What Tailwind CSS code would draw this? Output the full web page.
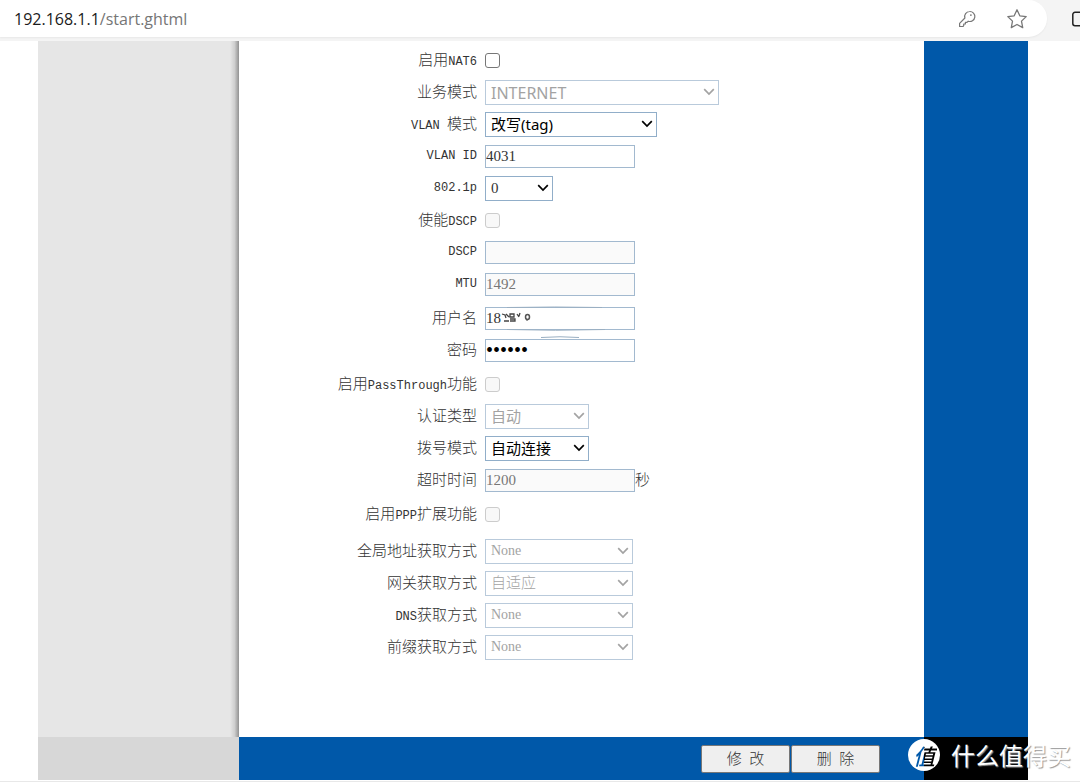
<!DOCTYPE html>
<html lang="zh-CN">
<head>
<meta charset="utf-8">
<title>start.ghtml</title>
<script src="https://cdn.jsdelivr.net/npm/@tailwindcss/browser@4"></script>
</head>
<body class="flex min-h-screen flex-col bg-white font-['Liberation_Serif','Noto_Sans_CJK_SC',serif] text-[15px] leading-5 text-[#333]">

<svg class="hidden" aria-hidden="true">
  <symbol id="chevron" viewBox="0 0 12 8"><path d="M1.2 1.2 6 6l4.800-4.800" fill="none" stroke="currentColor" stroke-width="1.700"/></symbol>
</svg>

<!-- Browser address bar -->
<header class="flex h-[41px] overflow-hidden bg-[#f4f4f4] font-['Open_Sans',sans-serif] text-base">
  <div class="flex h-[37px] flex-1 items-center rounded-r-[19px] bg-white pr-[19px] pl-[14px] shadow-xs">
    <a href="#" class="flex-1"><span class="text-[#1b1b1b]">192.168.1.1</span><span class="text-[#767676]">/start.ghtml</span></a>
    <button type="button" aria-label="密码" class="mr-[30px] text-[#777]">
      <svg class="size-[18px]" viewBox="0 0 18 18" fill="none" stroke="currentColor" stroke-width="1.200" stroke-linejoin="round"><path d="M11.500 1.500a5 5 0 1 1-1.300 9.700L9 12.400H7.400V14H5.700v1.700L5 16.500H1.600v-3.200l5.300-5.300A5 5 0 0 1 11.500 1.500Z"/><circle cx="12.900" cy="5.100" r=".9" fill="currentColor" stroke="none"/></svg>
    </button>
    <button type="button" aria-label="收藏" class="text-[#777]">
      <svg class="size-[22px]" viewBox="0 0 22 22" fill="none" stroke="currentColor" stroke-width="1.300" stroke-linejoin="round"><path d="m11 1.800 2.800 6 6.400.8-4.700 4.500 1.200 6.500L11 16.500l-5.700 3.100 1.200-6.500L1.800 8.600l6.400-.8Z"/></svg>
    </button>
  </div>
  <button type="button" aria-label="分屏" class="flex h-[37px] w-[33px] items-center justify-end overflow-hidden text-[#222]">
    <svg class="h-4 w-[9px]" viewBox="0 0 9 16" fill="none" stroke="currentColor" stroke-width="1.500"><path d="M10 1.300H4A2.200 2.200 0 0 0 1.800 3.500v9A2.200 2.200 0 0 0 4 14.700h6"/></svg>
  </button>
</header>

<main class="flex flex-1 pr-[52px] pl-[38px]">
  <aside class="flex w-[201px] justify-end bg-[#e6e6e6]"><div class="w-[9px] bg-linear-to-r from-[#e6e6e6] via-[#cfcfcf] to-[#929292]"></div></aside>

  <form class="flex flex-1 flex-col pt-[3px]">
    <div class="flex h-8 items-center gap-2"><label for="nat6" class="w-[238px] text-right font-light">启用<span class="font-['Liberation_Mono',monospace] text-xs">NAT6</span></label>
      <input id="nat6" type="checkbox" class="size-[15px] appearance-none rounded-[3px] border border-[#777] bg-white"></div>

    <div class="flex h-8 items-center gap-2"><label for="service" class="w-[238px] text-right font-light">业务模式</label>
      <span class="relative w-[234px] text-[#a3a3a3]"><select id="service" disabled class="block h-[25px] w-full appearance-none border border-[#b9cadb] bg-white pl-[5px] font-['Noto_Sans','Noto_Sans_CJK_SC',sans-serif] text-base"><option>INTERNET</option></select><svg class="pointer-events-none absolute top-2 right-1 h-2 w-3"><use href="#chevron"/></svg></span></div>

    <div class="flex h-8 items-center gap-2"><label for="vlanmode" class="w-[238px] text-right font-light"><span class="font-['Liberation_Mono',monospace] text-xs">VLAN </span>模式</label>
      <span class="relative w-[172px] text-black"><select id="vlanmode" class="block h-[25px] w-full appearance-none border border-[#91aec9] bg-white pl-[5px] font-['Noto_Sans','Noto_Sans_CJK_SC',sans-serif]"><option>改写(tag)</option></select><svg class="pointer-events-none absolute top-2 right-1 h-2 w-3"><use href="#chevron"/></svg></span></div>

    <div class="flex h-8 items-center gap-2"><label for="vlanid" class="w-[238px] text-right font-['Liberation_Mono',monospace] text-xs">VLAN ID</label>
      <input id="vlanid" type="text" value="4031" class="h-[23px] w-[150px] border border-[#a2b9cf] bg-white"></div>

    <div class="flex h-8 items-center gap-2"><label for="dot1p" class="w-[238px] text-right font-['Liberation_Mono',monospace] text-xs">802.1p</label>
      <span class="relative w-[68px] text-black"><select id="dot1p" class="block h-[25px] w-full appearance-none border border-[#91aec9] bg-white pl-[5px] text-[#333]"><option>0</option></select><svg class="pointer-events-none absolute top-2 right-1 h-2 w-3"><use href="#chevron"/></svg></span></div>

    <div class="flex h-8 items-center gap-2"><label for="dscpon" class="w-[238px] text-right font-light">使能<span class="font-['Liberation_Mono',monospace] text-xs">DSCP</span></label>
      <input id="dscpon" type="checkbox" disabled class="size-[15px] appearance-none rounded-[3px] border border-[#ccc] bg-[#f8f8f8]"></div>

    <div class="flex h-8 items-center gap-2"><label for="dscp" class="w-[238px] text-right font-['Liberation_Mono',monospace] text-xs">DSCP</label>
      <input id="dscp" type="text" disabled class="h-[23px] w-[150px] border border-[#a2b9cf] bg-[#fafafa]"></div>

    <div class="flex h-8 items-center gap-2"><label for="mtu" class="w-[238px] text-right font-['Liberation_Mono',monospace] text-xs">MTU</label>
      <input id="mtu" type="text" value="1492" disabled class="h-[23px] w-[150px] border border-[#a2b9cf] bg-[#fafafa] text-[#777]"></div>

    <div class="mt-0.5 flex h-8 items-center gap-2"><label for="user" class="w-[238px] text-right font-light">用户名</label>
      <span class="relative w-[150px]"><input id="user" type="text" value="18" class="block h-[23px] w-full border border-[#a2b9cf] bg-white">
        <!-- Smudge over the hidden part of the account name -->
        <svg class="pointer-events-none absolute -top-1 left-0 h-9 w-[150px]" viewBox="0 0 150 36" fill="none"><path d="M22 4.500Q70 3.500 117 4.500M22 26.500Q70 28 120 26.500M56 34.500Q75 33 94 34.500" stroke="#9aafc2"/><path d="m17 11 3 1 1 3m-2 3h5m-3-7 3 3m1-3h4v3h-4Zm0 5h5v2h-5M32 11l2 3m1-4-1 3" stroke="#444" stroke-width="1.300"/><ellipse cx="42.500" cy="14" rx="2" ry="2.500" stroke="#555" stroke-width="1.500"/><path d="M42 17v1" stroke="#555"/></svg></span></div>

    <div class="flex h-8 items-center gap-2"><label for="pass" class="w-[238px] text-right font-light">密码</label>
      <input id="pass" type="password" value="123456" class="h-[23px] w-[150px] border border-[#a2b9cf] bg-transparent text-xl text-black"></div>

    <div class="mt-0.5 flex h-8 items-center gap-2"><label for="passthrough" class="w-[238px] text-right font-light">启用<span class="font-['Liberation_Mono',monospace] text-xs">PassThrough</span>功能</label>
      <input id="passthrough" type="checkbox" disabled class="size-[15px] appearance-none rounded-[3px] border border-[#ccc] bg-[#f8f8f8]"></div>

    <div class="flex h-8 items-center gap-2"><label for="auth" class="w-[238px] text-right font-light">认证类型</label>
      <span class="relative w-[104px] text-[#a3a3a3]"><select id="auth" disabled class="block h-[25px] w-full appearance-none border border-[#b9cadb] bg-white pl-[5px] font-['Noto_Sans','Noto_Sans_CJK_SC',sans-serif]"><option>自动</option></select><svg class="pointer-events-none absolute top-2 right-1 h-2 w-3"><use href="#chevron"/></svg></span></div>

    <div class="flex h-8 items-center gap-2"><label for="dial" class="w-[238px] text-right font-light">拨号模式</label>
      <span class="relative w-[104px] text-black"><select id="dial" class="block h-[25px] w-full appearance-none border border-[#91aec9] bg-white pl-[5px] font-['Noto_Sans','Noto_Sans_CJK_SC',sans-serif]"><option>自动连接</option></select><svg class="pointer-events-none absolute top-2 right-1 h-2 w-3"><use href="#chevron"/></svg></span></div>

    <div class="flex h-8 items-center gap-2"><label for="timeout" class="w-[238px] text-right font-light">超时时间</label>
      <span class="flex items-center font-light"><input id="timeout" type="text" value="1200" disabled class="h-[23px] w-[150px] border border-[#a2b9cf] bg-[#fafafa] text-[#777]">秒</span></div>

    <div class="mt-0.5 flex h-8 items-center gap-2"><label for="pppext" class="w-[238px] text-right font-light">启用<span class="font-['Liberation_Mono',monospace] text-xs">PPP</span>扩展功能</label>
      <input id="pppext" type="checkbox" disabled class="size-[15px] appearance-none rounded-[3px] border border-[#ccc] bg-[#f8f8f8]"></div>

    <div class="mt-[5px] flex h-8 items-center gap-2"><label for="gaddr" class="w-[238px] text-right font-light">全局地址获取方式</label>
      <span class="relative w-[148px] text-[#a3a3a3]"><select id="gaddr" disabled class="block h-[25px] w-full appearance-none border border-[#b9cadb] bg-white pl-[5px] text-sm"><option>None</option></select><svg class="pointer-events-none absolute top-2 right-1 h-2 w-3"><use href="#chevron"/></svg></span></div>

    <div class="flex h-8 items-center gap-2"><label for="gateway" class="w-[238px] text-right font-light">网关获取方式</label>
      <span class="relative w-[148px] text-[#a3a3a3]"><select id="gateway" disabled class="block h-[25px] w-full appearance-none border border-[#b9cadb] bg-white pl-[5px] font-light"><option>自适应</option></select><svg class="pointer-events-none absolute top-2 right-1 h-2 w-3"><use href="#chevron"/></svg></span></div>

    <div class="flex h-8 items-center gap-2"><label for="dns" class="w-[238px] text-right font-light"><span class="font-['Liberation_Mono',monospace] text-xs">DNS</span>获取方式</label>
      <span class="relative w-[148px] text-[#a3a3a3]"><select id="dns" disabled class="block h-[25px] w-full appearance-none border border-[#b9cadb] bg-white pl-[5px] text-sm"><option>None</option></select><svg class="pointer-events-none absolute top-2 right-1 h-2 w-3"><use href="#chevron"/></svg></span></div>

    <div class="flex h-8 items-center gap-2"><label for="prefix" class="w-[238px] text-right font-light">前缀获取方式</label>
      <span class="relative w-[148px] text-[#a3a3a3]"><select id="prefix" disabled class="block h-[25px] w-full appearance-none border border-[#b9cadb] bg-white pl-[5px] text-sm"><option>None</option></select><svg class="pointer-events-none absolute top-2 right-1 h-2 w-3"><use href="#chevron"/></svg></span></div>
  </form>

  <div class="w-[104px] bg-[#0058a9]"></div>
</main>

<footer class="relative mb-px flex h-[45px] border-b border-[#e8e8e8] pr-[52px] pb-px pl-[38px]">
  <div class="w-[201px] bg-[#d7d7d7]"></div>
  <div class="flex flex-1 items-center justify-end gap-px bg-[#0058a9] pr-[44px]">
    <button type="button" class="h-7 w-[89px] rounded-xs border border-[#777] bg-[#efefef] font-light">修&nbsp; 改</button>
    <button type="button" class="h-7 w-[89px] rounded-xs border border-[#777] bg-[#efefef] font-light">删&nbsp; 除</button>
  </div>
  <div class="w-[104px] bg-black"></div>
  <!-- Site watermark -->
  <div class="absolute top-0.5 right-[9px] flex items-center gap-[11px] font-['Noto_Sans_CJK_SC',sans-serif]">
    <span class="flex size-8 items-center justify-center rounded-full bg-white"><span class="bg-linear-to-r from-[#0058a9] from-50% to-black to-50% bg-clip-text px-0.5 text-[22px] leading-7 font-medium text-transparent italic">值</span></span>
    <span class="text-2xl text-white text-shadow-[1px_1px_1px_#999]">什么值得买</span>
  </div>
</footer>
</body>
</html>
